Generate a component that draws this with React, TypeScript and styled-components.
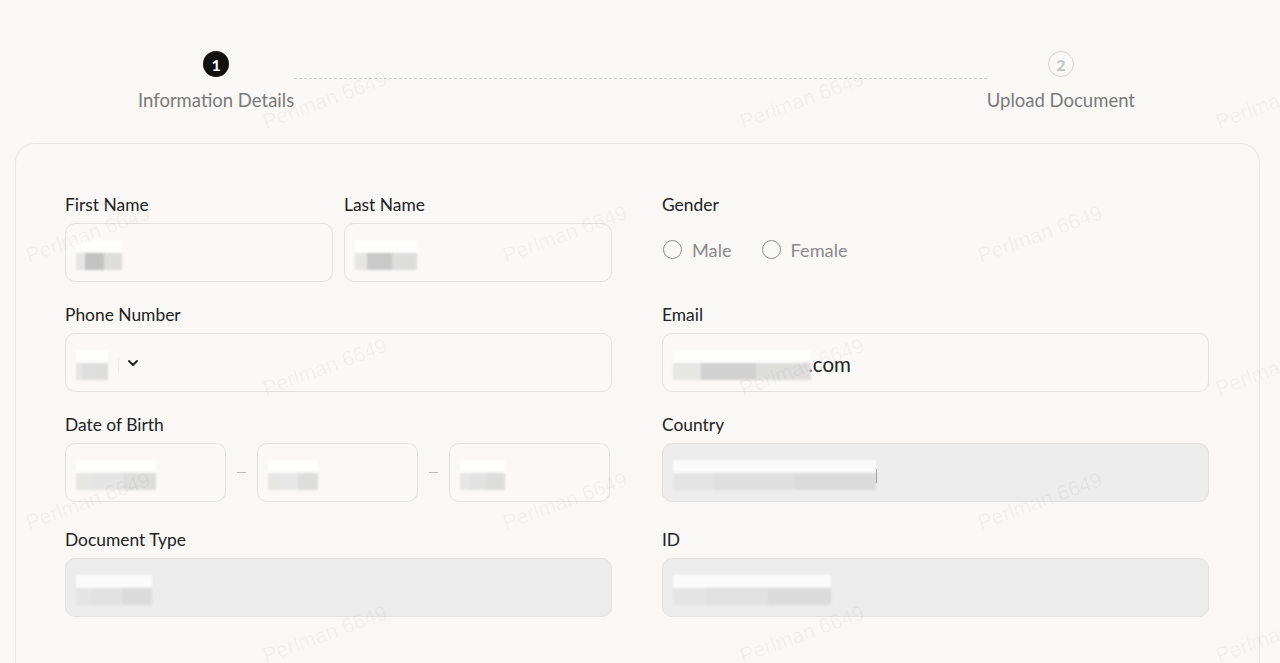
import React from "react";
import styled, { createGlobalStyle } from "styled-components";

const Global = createGlobalStyle`
  html, body { margin: 0; padding: 0; background: #f9f8f6; }
  body { font-family: Lato, "Noto Sans", "Liberation Sans", sans-serif; -webkit-font-smoothing: antialiased; }
  * { box-sizing: border-box; }
`;

const Page = styled.div`
  position: relative;
  width: 1280px;
  height: 663px;
  overflow: hidden;
  background: #f9f8f6;
`;

const Stepper = styled.div`
  display: flex;
  align-items: flex-start;
  padding: 51px 145px 0 138px;
  height: 143px;
`;

const Step = styled.div`
  display: flex;
  flex-direction: column;
  align-items: center;
  gap: 12px;
`;

const StepDot = styled.div<{ $active?: boolean }>`
  width: 26px;
  height: 26px;
  border-radius: 50%;
  display: flex;
  align-items: center;
  justify-content: center;
  font-size: 16px;
  font-weight: 700;
  background: ${(p) => (p.$active ? "#111" : "transparent")};
  color: ${(p) => (p.$active ? "#fff" : "#c4c4c4")};
  border: ${(p) => (p.$active ? "none" : "1.5px solid #d6d6d6")};
`;

const StepLabel = styled.div`
  font-size: 18.5px;
  color: #7a7a7a;
  line-height: 22px;
  white-space: nowrap;
`;

const Connector = styled.div`
  flex: 1;
  margin-top: 27px;
  border-top: 1px dashed #cfcfcf;
`;

const Card = styled.div`
  margin: 0 20px 0 15px;
  border: 1px solid #e8e7e4;
  border-bottom: none;
  border-radius: 20px 20px 0 0;
  padding: 51px 50px 0 49px;
  height: 540px;
  display: grid;
  grid-template-columns: 547px 547px;
  column-gap: 50px;
  align-content: start;
`;

const Field = styled.div<{ $extra?: number }>`
  display: flex;
  flex-direction: column;
  gap: 8px;
  margin-bottom: ${(p) => 23 + (p.$extra || 0)}px;
`;

const Label = styled.div`
  font-size: 17.4px;
  line-height: 20px;
  color: #222;
`;

const Pair = styled.div`
  display: grid;
  grid-template-columns: 1fr 1fr;
  column-gap: 11px;
`;

const Sub = styled.div`
  display: flex;
  flex-direction: column;
  gap: 8px;
`;

const Input = styled.div<{ $disabled?: boolean }>`
  height: 59px;
  border: 1.5px solid #e2e2e2;
  border-radius: 10px;
  background: ${(p) => (p.$disabled ? "#ececec" : "#faf9f8")};
  display: flex;
  align-items: center;
  padding: 0 10px;
  position: relative;
`;

const Smudge = styled.div<{ $w: number; $dark?: string }>`
  width: ${(p) => p.$w}px;
  height: 30px;
  margin-top: 4px;
  filter: blur(1px);
  background:
    linear-gradient(to bottom, rgba(255,255,255,0.85) 0 45%, transparent 45%),
    linear-gradient(to right, #e4e4e4 0 20%, ${(p) => p.$dark || "#cfcfcf"} 20% 60%, #dadada 60% 100%);
  background-size: 100% 100%, 100% 60%;
  background-position: 0 0, 0 100%;
  background-repeat: no-repeat;
  opacity: 0.9;
`;

const EmailText = styled.span`
  font-size: 20.5px;
  color: #222;
  margin-left: -3px;
  margin-top: 2px;
`;

const Caret = styled.span`
  width: 1px;
  height: 14px;
  background: #888;
  margin-top: 6px;
`;

const Divider = styled.span`
  width: 1px;
  height: 14px;
  background: #ececec;
  margin: 4px 6px 0 10px;
`;

const Chevron = () => (
  <svg width="16" height="16" viewBox="0 0 24 24" fill="none" stroke="#222" strokeWidth="2.8" strokeLinecap="round" strokeLinejoin="round">
    <path d="m6 9 6 6 6-6" />
  </svg>
);

const DateRow = styled.div`
  display: grid;
  grid-template-columns: 161px 31px 161px 31px 161px;
  align-items: center;
`;

const Dash = styled.span`
  justify-self: center;
  width: 9px;
  height: 1px;
  background: #bdbdbd;
`;

const Radios = styled.div`
  display: flex;
  align-items: center;
  gap: 30px;
  height: 59px;
  padding: 0 0 6px 1px;
`;

const Radio = styled.label`
  display: flex;
  align-items: center;
  gap: 10px;
  font-size: 18.2px;
  color: #8a8a8a;
`;

const RadioCircle = styled.span`
  width: 19px;
  height: 19px;
  border: 1.5px solid #8d8d8d;
  border-radius: 50%;
`;

const Watermarks = styled.div`
  position: absolute;
  inset: 0;
  pointer-events: none;
`;

const Mark = styled.span`
  position: absolute;
  font-size: 21px;
  color: rgba(0, 0, 0, 0.045);
  transform: translate(-50%, -50%) rotate(-20deg);
  white-space: nowrap;
  font-family: "Liberation Sans", Arial, sans-serif;
`;

const marks: [number, number][] = [];
for (let r = 0; r < 5; r++) {
  const y = 100 + r * 133.5;
  const xs = r % 2 === 0 ? [325, 802, 1278] : [88, 565, 1040];
  xs.forEach((x) => marks.push([x, y]));
}

export default function App() {
  return (
    <Page>
      <Global />
      <Stepper>
        <Step>
          <StepDot $active>1</StepDot>
          <StepLabel>Information Details</StepLabel>
        </Step>
        <Connector />
        <Step>
          <StepDot>2</StepDot>
          <StepLabel>Upload Document</StepLabel>
        </Step>
      </Stepper>
      <Card>
        <Field>
          <Pair>
            <Sub>
              <Label>First Name</Label>
              <Input>
                <Smudge $w={46} $dark="#bdbdbd" />
              </Input>
            </Sub>
            <Sub>
              <Label>Last Name</Label>
              <Input>
                <Smudge $w={62} $dark="#c4c4c4" />
              </Input>
            </Sub>
          </Pair>
        </Field>
        <Field>
          <Label>Gender</Label>
          <Radios>
            <Radio>
              <RadioCircle />
              Male
            </Radio>
            <Radio>
              <RadioCircle />
              Female
            </Radio>
          </Radios>
        </Field>
        <Field>
          <Label>Phone Number</Label>
          <Input>
            <Smudge $w={32} $dark="#dcdcdc" />
            <Divider />
            <Chevron />
          </Input>
        </Field>
        <Field>
          <Label>Email</Label>
          <Input>
            <Smudge $w={138} $dark="#cdcdcd" />
            <EmailText>.com</EmailText>
          </Input>
        </Field>
        <Field $extra={5}>
          <Label>Date of Birth</Label>
          <DateRow>
            <Input>
              <Smudge $w={80} $dark="#e2e2e2" />
            </Input>
            <Dash />
            <Input>
              <Smudge $w={50} $dark="#e6e6e6" />
            </Input>
            <Dash />
            <Input>
              <Smudge $w={45} $dark="#e0e0e0" />
            </Input>
          </DateRow>
        </Field>
        <Field $extra={5}>
          <Label>Country</Label>
          <Input $disabled>
            <Smudge $w={203} $dark="#dedede" />
            <Caret />
          </Input>
        </Field>
        <Field>
          <Label>Document Type</Label>
          <Input $disabled>
            <Smudge $w={76} $dark="#e2e2e2" />
          </Input>
        </Field>
        <Field>
          <Label>ID</Label>
          <Input $disabled>
            <Smudge $w={158} $dark="#e0e0e0" />
          </Input>
        </Field>
      </Card>
      <Watermarks>
        {marks.map(([x, y], i) => (
          <Mark key={i} style={{ left: x, top: y }}>
            Perlman 6649
          </Mark>
        ))}
      </Watermarks>
    </Page>
  );
}
